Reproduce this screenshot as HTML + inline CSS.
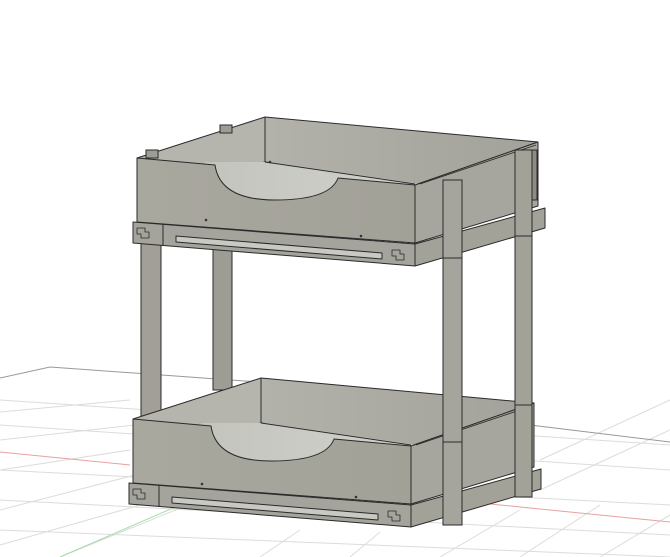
<!DOCTYPE html>
<html><head><style>html,body{margin:0;padding:0;background:#fff;width:670px;height:557px;overflow:hidden}</style></head>
<body>
<svg width="670" height="557" viewBox="0 0 670 557" xmlns="http://www.w3.org/2000/svg">
<defs>
<linearGradient id="fr" x1="0" x2="1"><stop offset="0" stop-color="#a9a89f"/><stop offset="1" stop-color="#a2a198"/></linearGradient>
<linearGradient id="bw" x1="0" x2="1"><stop offset="0" stop-color="#b3b2aa"/><stop offset="1" stop-color="#a3a29a"/></linearGradient>
<linearGradient id="fl" x1="0" x2="1"><stop offset="0" stop-color="#c4c4be"/><stop offset="1" stop-color="#d2d2cd"/></linearGradient>
<g id="tray" stroke="#2a2a2a" stroke-width="1" stroke-linejoin="round">
<polygon points="137,158 265,117 265,162 215,172" fill="#b6b5ad"/>
<polygon points="265,117 538,142 415,185 265,162" fill="url(#bw)"/>
<polygon points="205,162 270,162 420,184 420,215 205,215" fill="url(#fl)" stroke="none"/>
<line x1="265" y1="162" x2="415" y2="184"/>
<polygon points="415,185 538,142 538,206 415,243" fill="#a7a69e"/>
<polyline points="420,184 536,145" fill="none" stroke-width="0.8"/>
<path d="M137 158 L215 165 Q220 200 275 200 Q330 200 338 178 L415 185 L415 243 L137 222 Z" fill="url(#fr)"/>
<polygon points="133,222 415,244 415,266 133,243" fill="#a5a49c"/>
<polygon points="176,236 382,253 382,259 176,242" fill="#c9c9c4"/>
<path d="M137 228 h8 v4 h4 v6 h-8 v-4 h-4 Z M392 250 h8 v4 h4 v6 h-8 v-4 h-4 Z" fill="none" stroke-width="0.8"/>
<line x1="163" y1="224" x2="163" y2="246"/>
<polygon points="415,244 545,208 545,228 415,266" fill="#a3a299"/>
</g>
</defs>
<!-- grid -->
<g stroke="#dcdcdc" stroke-width="1" fill="none">
<path d="M0 400 L670 445"/><path d="M0 425 L670 470"/><path d="M0 470 L670 505"/><path d="M0 500 L670 535"/><path d="M0 530 L670 557"/>
<path d="M0 412 L130 400"/><path d="M0 440 L135 425"/><path d="M0 470 L130 450"/><path d="M0 510 L135 475"/><path d="M0 545 L140 505"/><path d="M60 557 L200 500"/>
<path d="M440 557 L520 510"/><path d="M520 557 L600 505"/><path d="M600 557 L670 515"/><path d="M540 490 L670 430"/><path d="M540 460 L670 400"/>
<path d="M260 557 L300 530"/><path d="M350 557 L380 532"/>
</g>
<path d="M0 378 L50 367 L300 385" stroke="#999" fill="none"/>
<path d="M530 425 L670 442" stroke="#999" fill="none"/>
<path d="M0 452 L130 465" stroke="#e8a0a0" fill="none"/>
<path d="M450 500 L670 522" stroke="#e8a0a0" fill="none"/>
<path d="M60 557 L180 505" stroke="#a8dca8" fill="none"/>

<g stroke="#2a2a2a" stroke-width="1">
<rect x="213" y="240" width="19" height="150" fill="#9e9d95"/>
<rect x="141" y="243" width="20" height="177" fill="#a19f97"/>
</g>
<use href="#tray" transform="translate(-4,261)"/>
<use href="#tray"/>
<g stroke="#2a2a2a" stroke-width="1">
<rect x="146" y="150" width="12" height="8" fill="#9e9d95"/>
<rect x="220" y="125" width="12" height="8" fill="#9e9d95"/>
<rect x="515" y="150" width="17" height="347" fill="#a3a299"/>
<line x1="515" y1="236" x2="532" y2="236"/><line x1="515" y1="405" x2="532" y2="405"/>
<rect x="532" y="150" width="5" height="50" fill="#8d8c85"/>
<rect x="443" y="180" width="19" height="345" fill="#a6a59d"/>
<line x1="443" y1="258" x2="462" y2="258"/><line x1="443" y1="442" x2="462" y2="442"/>
</g>
<g fill="#333"><circle cx="206" cy="220" r="1.3"/><circle cx="361" cy="236" r="1.3"/><circle cx="270" cy="162" r="1.3"/><circle cx="202" cy="484" r="1.3"/><circle cx="356" cy="497" r="1.3"/></g>
</svg>
</body></html>
